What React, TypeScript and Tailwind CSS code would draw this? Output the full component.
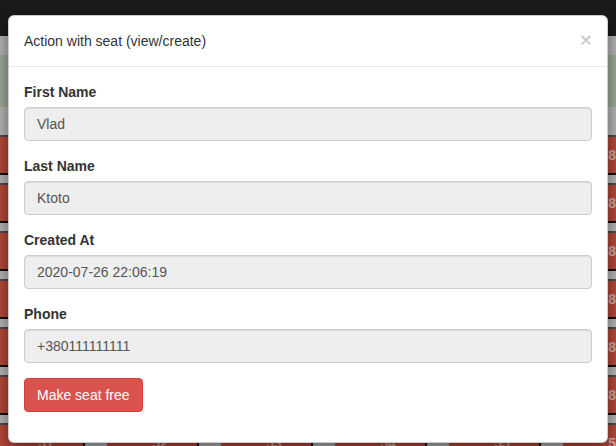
import { FunctionComponent } from "react";

const COLUMNS = [-7, 107, 221, 335, 449, 563];
const ROWS: (number | null)[][] = [
  [null, null, null, null, null, 81],
  [null, null, null, null, null, 82],
  [null, null, null, null, null, 83],
  [null, null, null, null, null, 84],
  [null, null, null, null, null, 85],
  [null, null, null, null, null, 86],
  [51, 52, 53, 54, 55, 56],
];

const fields = [
  { label: "First Name", value: "Vlad" },
  { label: "Last Name", value: "Ktoto" },
  { label: "Created At", value: "2020-07-26 22:06:19" },
  { label: "Phone", value: "+380111111111" },
];

const SeatRow: FunctionComponent<{ numbers: (number | null)[] }> = ({
  numbers,
}) => {
  return (
    <div className="relative w-full h-[48px] flex flex-col">
      <div className="w-full h-[2px] bg-[#4a4a4a]" />
      <div className="w-full h-[36px] flex bg-[#b4b4b4] overflow-hidden">
        <div className="flex w-[700px] -ml-[7px] shrink-0">
          {COLUMNS.map((_, i) => (
            <div key={i} className="flex h-full shrink-0">
              <div className="w-[90px] h-full bg-[#b5483a] flex items-center justify-center text-[14px] font-bold text-[#d2aaa4] pl-[16px]">
                {numbers[i] ?? ""}
              </div>
              <div className="w-[2px] h-full bg-[#111]" />
              <div className="w-[22px] h-full bg-[#b4b4b4]" />
            </div>
          ))}
        </div>
      </div>
      <div className="w-full h-[2px] bg-[#111]" />
      <div className="w-full h-[8px] bg-[#b4b4b4]" />
    </div>
  );
};

const App: FunctionComponent = (): JSX.Element => {
  return (
    <div
      className="relative w-[616px] h-[446px] overflow-hidden bg-[#b4b4b4]"
      style={{ fontFamily: '"Liberation Sans", Arial, sans-serif' }}
    >
      <div className="flex flex-col w-full">
        <div className="w-full h-[36px] bg-[#1a1a1a]" />
        <div className="w-full h-[19px] bg-[#b4b4b4]" />
        <div className="w-full h-[52px] bg-[#9dab97]" />
        <div className="w-full h-[28px] bg-[#b4b4b4]" />
        {ROWS.map((r, i) => (
          <SeatRow key={i} numbers={r} />
        ))}
      </div>

      <div className="absolute left-[8px] top-[15px] w-[600px] bg-white border border-black/20 rounded-[6px] shadow-[0_5px_15px_rgba(0,0,0,0.5)] flex flex-col">
        <div className="flex items-start justify-between p-[15px] border-b border-[#e5e5e5]">
          <div className="text-[14px] leading-[20px] text-[#333]">
            Action with seat (view/create)
          </div>
          <div className="text-[21px] leading-[21px] font-bold text-black/20 -mt-[2px]">
            ×
          </div>
        </div>
        <div className="flex flex-col p-[15px]">
          {fields.map((f) => (
            <div key={f.label} className="flex flex-col mb-[15px]">
              <label className="text-[14px] leading-[20px] font-bold text-[#333] mb-[5px]">
                {f.label}
              </label>
              <div className="h-[34px] w-full flex items-center px-[12px] bg-[#eee] border border-[#ccc] rounded-[4px] shadow-[inset_0_1px_1px_rgba(0,0,0,0.075)] text-[14px] text-[#555]">
                {f.value}
              </div>
            </div>
          ))}
          <div className="flex mb-[15px]">
            <button className="h-[34px] px-[12px] bg-[#d9534f] border border-[#d43f3a] rounded-[4px] text-white text-[14px] leading-[20px]">
              Make seat free
            </button>
          </div>
        </div>
      </div>
    </div>
  );
};

export default App;
